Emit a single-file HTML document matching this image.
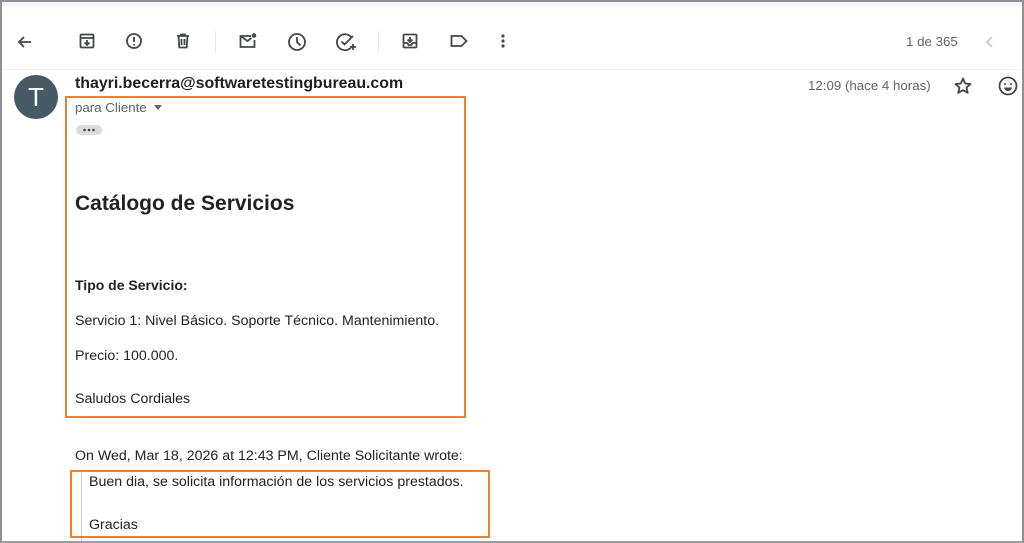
<!DOCTYPE html>
<html><head><meta charset="utf-8"><style>
*{margin:0;padding:0;box-sizing:border-box}
body{width:1024px;height:543px;overflow:hidden;background:#fff;font-family:"Liberation Sans",Arial,sans-serif;color:#222;position:relative}
.frame{position:absolute;inset:0;border:2px solid #8d9096;border-bottom:2px solid #9a9da3;pointer-events:none}
.top{position:absolute;left:0;top:0;width:1024px;height:10px;background:linear-gradient(#eef1f6,#fff)}
.a{position:absolute;white-space:nowrap}
svg.i{position:absolute;fill:none;stroke:#444746;stroke-width:1.8}
.sep{position:absolute;top:31px;width:1px;height:22px;background:#e6e6e6}
.ob{position:absolute;border:2px solid #ee7f2d}
</style></head><body>
<div class="top"></div>
<svg class="i" style="left:15px;top:32px" width="20" height="20" viewBox="0 0 20 20"><path d="M16 10H4M9 5l-5 5 5 5"/></svg>
<svg class="i" style="left:78px;top:32px" width="18" height="18" viewBox="0 0 18 18"><rect x="2.5" y="2.5" width="13" height="13" rx="1"/><path d="M2.5 6h13M9 8v5M6.5 10.5 9 13l2.5-2.5"/></svg>
<svg class="i" style="left:125px;top:32px" width="18" height="18" viewBox="0 0 18 18"><circle cx="9" cy="9" r="7"/><path d="M9 5v5M9 12v1.5"/></svg>
<svg class="i" style="left:174px;top:32px" width="18" height="18" viewBox="0 0 18 18"><path d="M3 4h12M7 4V2.5h4V4M4.5 4l.8 11.5h7.4L13.5 4M7.5 7v6M10.5 7v6"/></svg>
<div class="sep" style="left:215px"></div>
<svg class="i" style="left:238px;top:32px" width="20" height="18" viewBox="0 0 20 18"><path d="M13 4H2.5v11h14V8M2.5 4l7 5 4-3"/><circle cx="16" cy="3.5" r="2.3" fill="#444746" stroke="none"/></svg>
<svg class="i" style="left:287px;top:32px" width="20" height="20" viewBox="0 0 20 20"><circle cx="10" cy="10" r="8"/><path d="M10 5v5l3.5 3.5"/></svg>
<svg class="i" style="left:335px;top:32px" width="22" height="20" viewBox="0 0 22 20"><path d="M16 5A8 8 0 1 0 17 14M6.5 9.5l3 3L18 4M15 15h6M18 12v6"/></svg>
<div class="sep" style="left:378px"></div>
<svg class="i" style="left:401px;top:32px" width="18" height="18" viewBox="0 0 18 18"><rect x="2.5" y="2.5" width="13" height="13" rx="1"/><path d="M2.5 11h4l1 2h3l1-2h4M9 5v5M6.5 7.5 9 10l2.5-2.5"/></svg>
<svg class="i" style="left:449px;top:33px" width="20" height="16" viewBox="0 0 20 16"><path d="M2.5 3h10l5 5-5 5h-10z"/></svg>
<svg style="position:absolute;left:500px;top:33px" width="6" height="16" viewBox="0 0 6 16"><circle cx="3" cy="3" r="1.6" fill="#444746"/><circle cx="3" cy="8" r="1.6" fill="#444746"/><circle cx="3" cy="13" r="1.6" fill="#444746"/></svg>
<div class="a" style="left:906px;top:34px;font-size:13.3px;color:#5f6368">1 de 365</div>
<svg class="i" style="left:984px;top:34px;stroke:#c4c7c5" width="12" height="16" viewBox="0 0 12 16"><path d="M8 3 3 8l5 5"/></svg>
<div style="position:absolute;left:2px;top:69px;width:1020px;height:1px;background:#f0f0f0"></div>
<div style="position:absolute;left:14px;top:75px;width:44px;height:44px;border-radius:50%;background:#455a64;color:#fff;font-size:26px;text-align:center;line-height:44px">T</div>
<div class="a" style="left:75px;top:75px;font-size:15.9px;font-weight:bold;color:#1f1f1f">thayri.becerra@softwaretestingbureau.com</div>
<div class="a" style="left:808px;top:78px;font-size:13.3px;color:#5f6368">12:09 (hace 4 horas)</div>
<svg class="i" style="left:953px;top:76px" width="20" height="20" viewBox="0 0 20 20"><path d="M10 2.5l2.2 5 5.3.5-4 3.6 1.2 5.3L10 14.1 5.3 16.9l1.2-5.3-4-3.6 5.3-.5z" stroke-linejoin="round"/></svg>
<svg class="i" style="left:997px;top:75px" width="22" height="22" viewBox="0 0 22 22"><circle cx="11" cy="11" r="8.5"/><circle cx="8" cy="9" r="1" fill="#444746" stroke="none"/><circle cx="14" cy="9" r="1" fill="#444746" stroke="none"/><path d="M7 12.5h8c-.5 2.2-2 3.5-4 3.5s-3.5-1.3-4-3.5z" fill="#444746" stroke="none"/></svg>
<div class="a" style="left:75px;top:100px;font-size:13.3px;color:#5f6368">para Cliente</div>
<div style="position:absolute;left:154px;top:105px;border-left:4px solid transparent;border-right:4px solid transparent;border-top:5px solid #5f6368"></div>
<div style="position:absolute;left:76px;top:125px;width:26px;height:10px;border-radius:5px;background:#dadce0"></div>
<svg style="position:absolute;left:76px;top:125px" width="26" height="10"><circle cx="8.5" cy="5" r="1.3" fill="#444"/><circle cx="13" cy="5" r="1.3" fill="#444"/><circle cx="17.5" cy="5" r="1.3" fill="#444"/></svg>
<div class="a" style="left:75px;top:192px;font-size:21px;font-weight:bold;color:#222">Catálogo de Servicios</div>
<div class="a" style="left:75px;top:277px;font-size:14px;font-weight:bold">Tipo de Servicio:</div>
<div class="a" style="left:75px;top:313px;font-size:14.2px">Servicio 1: Nivel Básico. Soporte Técnico. Mantenimiento.</div>
<div class="a" style="left:75px;top:348px;font-size:14.2px">Precio: 100.000.</div>
<div class="a" style="left:75px;top:391px;font-size:14.2px">Saludos Cordiales</div>
<div class="ob" style="left:65px;top:96px;width:401px;height:322px"></div>
<div class="a" style="left:75px;top:448px;font-size:14.2px">On Wed, Mar 18, 2026 at 12:43 PM, Cliente Solicitante wrote:</div>
<div style="position:absolute;left:81px;top:472px;width:1px;height:71px;background:#ccc"></div>
<div class="a" style="left:89px;top:474px;font-size:14.2px">Buen dia, se solicita información de los servicios prestados.</div>
<div class="a" style="left:89px;top:517px;font-size:14.2px">Gracias</div>
<div class="ob" style="left:70px;top:470px;width:420px;height:68px"></div>
<div class="frame"></div>
</body></html>
